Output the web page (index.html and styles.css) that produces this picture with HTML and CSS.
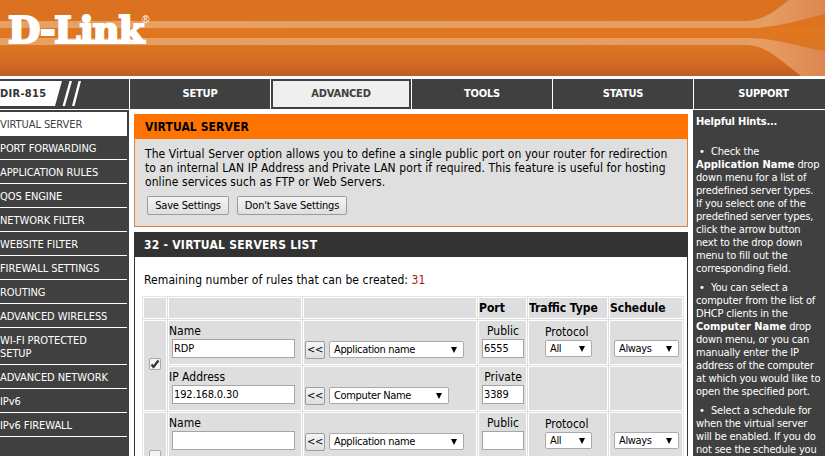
FILE: index.html
```html
<!DOCTYPE html>
<html lang="en">
<head>
<meta charset="utf-8">
<title>D-Link DIR-815</title>
<link rel="stylesheet" href="styles.css">
</head>
<body>
<div class="page">
<header class="banner">
<svg class="waves" width="825" height="76" viewBox="0 0 825 76" aria-hidden="true">
<defs><linearGradient id="flare" gradientUnits="userSpaceOnUse" x1="0" x2="825" y1="0" y2="0"><stop offset="0" stop-color="#e6a163"/><stop offset=".93" stop-color="#e69d62"/><stop offset="1" stop-color="#dd8650"/></linearGradient></defs>
<path fill="url(#flare)" d="M0 21H748C764 20 776 10 789 0H825V14C795 22 772 28 748 28H0Z"/>
<path fill="url(#flare)" d="M0 38H748C776 38 799 47 825 51V76H801C780 60 767 46 748 45H0Z"/>
</svg>
<div class="brand"><span class="brand-name">D-Link</span><span class="reg">®</span></div>
</header>
<nav class="tabs">
<div class="model"><span class="model-name">DIR-815</span><svg width="28" height="25" viewBox="0 0 28 25" aria-hidden="true"><path fill="#fff" d="M0 0H7L0 25ZM14.500 0H17L10 25H7.500ZM23.500 0H26L19.500 25H17Z"/></svg></div>
<a class="tab">SETUP</a><a class="tab current">ADVANCED</a><a class="tab">TOOLS</a><a class="tab">STATUS</a><a class="tab support">SUPPORT</a>
</nav>
<div class="columns">
<aside class="side">
<a class="active">VIRTUAL SERVER</a><a>PORT FORWARDING</a><a>APPLICATION RULES</a><a>QOS ENGINE</a><a>NETWORK FILTER</a><a>WEBSITE FILTER</a><a>FIREWALL SETTINGS</a><a>ROUTING</a><a>ADVANCED WIRELESS</a><a>WI-FI PROTECTED<br>SETUP</a><a>ADVANCED NETWORK</a><a>IPv6</a><a>IPv6 FIREWALL</a>
</aside>
<main>
<section class="intro">
<h1>VIRTUAL SERVER</h1>
<p>The Virtual Server option allows you to define a single public port on your router for redirection<br>to an internal LAN IP Address and Private LAN port if required. This feature is useful for hosting<br>online services such as FTP or Web Servers.</p>
<div class="buttons"><button class="save">Save Settings</button><button class="dont">Don't Save Settings</button></div>
</section>
<section class="list">
<h2>32 - VIRTUAL SERVERS LIST</h2>
<p class="remaining">Remaining number of rules that can be created: <span class="count">31</span></p>
<div class="grid">
<div class="c"></div><div class="c"></div><div class="c"></div><div class="c head">Port</div><div class="c head">Traffic Type</div><div class="c head">Schedule</div>
<div class="c tick"><span class="check"><svg width="12" height="12" viewBox="0 0 12 12" aria-hidden="true"><path d="M2.500 6.500L4.500 9L9.500 2.500" fill="none" stroke="#333" stroke-width="2.200"/></svg></span></div>
<div class="c field"><label>Name</label><div class="input">RDP</div></div>
<div class="c pick"><button class="copy">&lt;&lt;</button><div class="select app">Application name<i></i></div></div>
<div class="c port"><label>Public</label><div class="input">6555</div></div>
<div class="c proto"><label>Protocol</label><div class="select">All<i></i></div></div>
<div class="c sched"><div class="select">Always<i></i></div></div>
<div class="c field"><label>IP Address</label><div class="input ip">192.168.0.30</div></div>
<div class="c pick"><button class="copy">&lt;&lt;</button><div class="select comp">Computer Name<i></i></div></div>
<div class="c port"><label>Private</label><div class="input">3389</div></div>
<div class="c"></div><div class="c"></div>
<div class="c tick"><span class="check"></span></div>
<div class="c field"><label>Name</label><div class="input"></div></div>
<div class="c pick"><button class="copy">&lt;&lt;</button><div class="select app">Application name<i></i></div></div>
<div class="c port"><label>Public</label><div class="input"></div></div>
<div class="c proto"><label>Protocol</label><div class="select">All<i></i></div></div>
<div class="c sched"><div class="select">Always<i></i></div></div>
<div class="c"></div><div class="c"></div><div class="c"></div><div class="c"></div><div class="c"></div>
</div>
</section>
</main>
<aside class="hints">
<h3>Helpful Hints...</h3>
<p><span class="dot">•</span>Check the<br><b>Application Name</b> drop<br>down menu for a list of<br>predefined server types.<br>If you select one of the<br>predefined server types,<br>click the arrow button<br>next to the drop down<br>menu to fill out the<br>corresponding field.</p>
<p><span class="dot">•</span>You can select a<br>computer from the list of<br>DHCP clients in the<br><b>Computer Name</b> drop<br>down menu, or you can<br>manually enter the IP<br>address of the computer<br>at which you would like to<br>open the specified port.</p>
<p><span class="dot">•</span>Select a schedule for<br>when the virtual server<br>will be enabled. If you do<br>not see the schedule you</p>
</aside>
</div>
</div>
</body>
</html>
```
FILE: styles.css
```css
* { box-sizing: border-box; }
body { margin: 0; background: #fff; overflow: hidden; font-family: "DejaVu Sans Condensed", "DejaVu Sans", sans-serif; font-stretch: condensed; font-size: 12px; color: #000; }
h1, h2, h3, p { margin: 0; }
.page { width: 825px; height: 456px; overflow: hidden; }
.banner { position: relative; height: 76px; background: linear-gradient(#da7021 0, #db7220 18px, #e17720 30px, #db7523 48px, #d66d23 60px, #bd5c24 76px); }
.waves { display: block; }
.brand { position: absolute; left: 8px; top: 10px; color: #fff; display: flex; align-items: flex-start; white-space: nowrap; }
.brand-name { width: 134px; font: 900 37px/40px "DejaVu Serif", serif; font-stretch: condensed; letter-spacing: -1px; -webkit-text-stroke: 2px #fff; transform: scaleX(1.12); transform-origin: 0 0; }
.reg { font: 10px/16px "Liberation Sans", sans-serif; padding-top: 2px; }

.tabs { display: grid; grid-template-columns: 129px 140px 140px 140px 140px 131px; column-gap: 1px; height: 29px; margin-top: 3px; }
.model { background: #404040; display: flex; padding-top: 2px; font-weight: bold; font-size: 11px; }
.model-name { width: 55px; height: 25px; line-height: 26px; background: #fff; color: #333; letter-spacing: .3px; }
.tab { background: #404040; color: #fff; font-weight: bold; font-size: 11px; line-height: 30px; text-align: center; letter-spacing: -.2px; }
.tab.current { background: #efefef; color: #404040; border: 2px solid #404040; line-height: 26px; }
.tab.support { padding-left: 8px; }

.columns { display: grid; grid-template-columns: 129px 564px 132px; height: 346px; margin-top: 2px; }
.side { background: #404040; padding: 2px 2px 0 0; font-size: 11px; line-height: 13px; letter-spacing: -.07px; }
.side a { display: block; min-height: 24px; padding: 6px 0 4px; color: #fff; border-bottom: 1px solid #fff; white-space: nowrap; }
.side .active { background: #fff; color: #404040; }

main { padding: 4px 5px 0; overflow: hidden; }
.intro { height: 113px; border: 1px solid #e08135; background: #dfdfdf; }
h1, h2 { height: 25px; padding-left: 10px; font-size: 12px; line-height: 26px; font-weight: bold; }
h1 { margin: -1px -1px 0; padding-left: 11px; background: #ff7400; letter-spacing: .1px; }
.intro p { padding: 8px 0 0 10px; line-height: 14px; white-space: nowrap; letter-spacing: .08px; }
.buttons { display: flex; gap: 8px; padding: 7px 0 0 12px; }
button { font: 11px/16px "DejaVu Sans Condensed", "DejaVu Sans", sans-serif; border: 1px solid #9c9c9c; border-radius: 2px; background: linear-gradient(#f5f5f5, #dedede); padding: 0; color: #000; height: 19px; letter-spacing: -.18px; }
.save { width: 82px; }
.dont { width: 110px; }
.list { height: 400px; margin-top: 5px; border: 1px solid #333; }
h2 { background: #333; color: #fff; margin: -1px -1px 0; letter-spacing: .25px; }
.remaining { padding: 15px 0 0 9px; line-height: 16px; height: 39px; white-space: nowrap; letter-spacing: .09px; }
.count { color: #b01020; }
.grid { display: grid; grid-template-columns: 24px 134px 174px 49px 80px 74px; grid-template-rows: 22px 45px 45px 45px 45px; gap: 1px; margin-left: 7px; width: 542px; background: #dedede; border: 1px solid #e4e4e4; }
.c { background: #dedede; border: 1px solid #fff; min-width: 0; overflow: hidden; white-space: nowrap; }
.head { font-weight: bold; line-height: 21px; padding-left: 0; }
.tick { grid-row: span 2; display: flex; align-items: center; justify-content: center; padding-bottom: 3px; }
.check { width: 12px; height: 12px; background: #f4f4f4; border: 1px solid #aaa; border-radius: 2px; }
.check svg { display: block; margin: -1px; }
label { display: block; line-height: 14px; }
.field { padding: 3px 0 0 0; }
.input { height: 19px; background: #fff; border: 1px solid #a5a5a5; font-size: 11px; line-height: 17px; padding-left: 1px; letter-spacing: -.15px; }
.field .input { width: 123px; margin: 1px 0 0 3px; }
.pick { display: flex; gap: 4px; padding: 20px 0 0 1px; }
.copy { width: 20px; height: 18px; }
.select { display: flex; justify-content: space-between; align-items: center; height: 17px; background: #fff; border: 1px solid #aaa; border-radius: 2px; font-size: 11px; padding: 0 6px 0 4px; letter-spacing: -.35px; }
.select i { border: 3.500px solid transparent; border-top: 6px solid #000; border-bottom: 0; }
.app { width: 135px; }
.comp { width: 120px; }
.port { padding: 3px 2px 0 3px; text-align: center; }
.port .input { margin-top: 1px; text-align: left; width: 42px; }
.proto { padding: 4px 0 0 16px; }
.proto .select { width: 47px; margin-top: 1px; }
.sched { padding: 19px 0 0 4px; }
.sched .select { width: 65px; }
.hints { background: #404040; color: #fff; font-size: 11px; line-height: 13px; padding: 5px 0 0 3px; white-space: nowrap; overflow: hidden; letter-spacing: -.18px; }
.hints b { letter-spacing: 0; }
.hints h3 { font-size: 11px; line-height: 13px; margin-bottom: 17px; letter-spacing: -.2px; }
.hints p { margin-bottom: 6px; }
.dot { display: inline-block; width: 15px; padding-left: 3px; }
```
